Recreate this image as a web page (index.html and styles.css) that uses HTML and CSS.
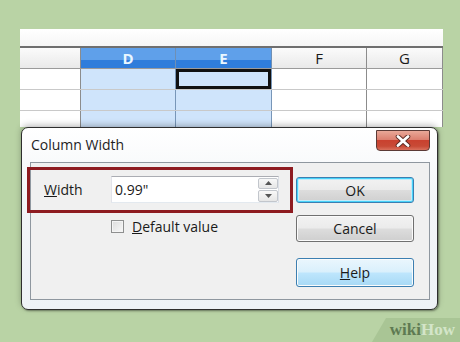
FILE: index.html
```html
<!DOCTYPE html>
<html>
<head>
<meta charset="utf-8">
<link rel="stylesheet" href="styles.css">
</head>
<body>
<div class="sheet">
  <div class="toolbar"></div>
  <div class="row head">
    <div class="c rh"></div>
    <div class="c sel-h">D</div>
    <div class="c sel-h">E</div>
    <div class="c">F</div>
    <div class="c">G</div>
  </div>
  <div class="row">
    <div class="c"></div><div class="c sel"></div><div class="c sel cur"></div><div class="c"></div><div class="c"></div>
  </div>
  <div class="row">
    <div class="c"></div><div class="c sel"></div><div class="c sel"></div><div class="c"></div><div class="c"></div>
  </div>
  <div class="row">
    <div class="c"></div><div class="c sel"></div><div class="c sel"></div><div class="c"></div><div class="c"></div>
  </div>
</div>

<div class="dialog">
  <div class="titlebar">
    <span class="title">Column Width</span>
    <div class="close">
      <svg width="16" height="12" viewBox="0 0 16 12"><path d="M3 1.5 L13 10.5 M13 1.5 L3 10.5" stroke="#5a2a22" stroke-width="4.6" stroke-linecap="round"/><path d="M3 1.5 L13 10.5 M13 1.5 L3 10.5" stroke="#fff" stroke-width="2.8" stroke-linecap="round"/></svg>
    </div>
  </div>
  <div class="client">
    <div class="left">
      <div class="redbox">
        <span class="label"><u>W</u>idth</span>
        <div class="input">
          <span class="val">0.99"</span>
          <div class="spin">
            <div class="sb"><svg width="7" height="4" viewBox="0 0 7 4"><path d="M0 4 L3.5 0 L7 4 Z" fill="#555"/></svg></div>
            <div class="sb"><svg width="7" height="4" viewBox="0 0 7 4"><path d="M0 0 L3.5 4 L7 0 Z" fill="#555"/></svg></div>
          </div>
        </div>
      </div>
      <div class="check">
        <span class="box"></span>
        <span><u>D</u>efault value</span>
      </div>
    </div>
    <div class="right">
      <div class="btn ok">OK</div>
      <div class="btn cancel">Cancel</div>
      <div class="btn help"><u>H</u>elp</div>
    </div>
  </div>
</div>

<div class="wm"><span class="wiki">wiki</span><span class="how">How</span></div>
</body>
</html>
```
FILE: styles.css
```css
html, body {
  margin: 0;
  padding: 0;
}
body {
  width: 460px;
  height: 342px;
  overflow: hidden;
  background: #b9d3a5;
  font-family: "Open Sans", "Noto Sans", sans-serif;
  color: #1a1a1a;
}
.sheet {
  margin: 29px 0 0 20px;
  width: 423px;
  height: 98px;
  overflow: hidden;
  background: #fff;
}
.toolbar {
  height: 17px;
  background: linear-gradient(#ffffff, #f6f6f6);
  border-bottom: 2px solid #6f6f6f;
}
.row {
  display: grid;
  grid-template-columns: 61px 95px 96px 95px 76px;
  height: 20px;
  border-bottom: 1px solid #c9c9c9;
}
.row.head {
  height: 20px;
  border-bottom: 1px solid #9a9a9a;
}
.c {
  box-sizing: border-box;
  border-right: 1px solid #8c8c8c;
  font-size: 15px;
  line-height: 20px;
  text-align: center;
}
.head .c {
  background: linear-gradient(#fbfbfb, #e9e9e9);
}
.head .c.sel-h {
  background: linear-gradient(#5fa0ea 0%, #5fa0ea 58%, #2f7ddb 60%, #2f7ddb 100%);
  color: #eaf7ff;
  font-weight: bold;
  border-right-color: #6f8fb4;
}
.c.sel {
  background: #cfe4fb;
  border-right-color: #7896b8;
}
.c.cur {
  box-shadow: inset 0 0 0 3px #111;
}

.dialog {
  position: relative;
  margin-left: 21px;
  width: 417px;
  height: 183px;
  box-sizing: border-box;
  border: 1px solid #2e2e2e;
  border-radius: 7px;
  background: linear-gradient(#ffffff 0%, #f2f5f8 40%, #eef2f6 100%);
  box-shadow: 0 -2px 6px rgba(0,0,0,0.25), 1px 1px 2px rgba(0,0,0,0.4);
  display: flex;
  flex-direction: column;
}
.titlebar {
  height: 34px;
  display: flex;
  justify-content: space-between;
  align-items: flex-start;
  padding: 0 7px 0 9px;
}
.title {
  font-size: 14px;
  line-height: 34px;
  color: #1e1e1e;
}
.close {
  margin-top: 2px;
  width: 54px;
  height: 21px;
  box-sizing: border-box;
  border: 1px solid #5b3a36;
  border-radius: 0 0 4px 4px;
  background: linear-gradient(#e9a898 0%, #dc8070 45%, #c9412f 50%, #c84a36 80%, #d9715d 100%);
  display: flex;
  align-items: center;
  justify-content: center;
}
.client {
  flex: 1;
  margin: 0 7px 9px 8px;
  border: 1px solid #8f979f;
  background: #f0f0f0;
  display: flex;
  align-items: flex-start;
}
.left {
  margin-left: -4px;
  width: 266px;
  margin-top: 4px;
}
.redbox {
  height: 46px;
  box-sizing: border-box;
  border: 3px solid #8e1b20;
  padding: 2px 11px 3px 14px;
  display: flex;
  align-items: center;
  font-size: 14px;
}
.label {
  width: 67px;
}
.input {
  width: 168px;
  height: 27px;
  box-sizing: border-box;
  border: 1px solid;
  border-color: #abadb3 #dbdfe6 #e3e9ef #e2e3ea;
  background: #fff;
  display: flex;
  align-items: center;
  padding-left: 3px;
}
.val {
  flex: 1;
  font-size: 14px;
}
.spin {
  width: 20px;
  height: 24px;
  display: flex;
  flex-direction: column;
  gap: 1px;
}
.sb {
  flex: 1;
  box-sizing: border-box;
  border: 1px solid #c2c6cc;
  border-radius: 2px;
  background: linear-gradient(#f8f8f8, #e6e6e6);
  display: flex;
  align-items: center;
  justify-content: center;
}
.check {
  margin-top: 4px;
  padding-left: 84px;
  display: flex;
  align-items: center;
  gap: 8px;
  font-size: 14px;
}
.box {
  width: 13px;
  height: 13px;
  box-sizing: border-box;
  border: 1px solid #8e8f8f;
  background: linear-gradient(135deg, #dcdcdc, #f8f8f8);
  box-shadow: inset 0 0 0 1px #f4f4f4;
}
.right {
  margin-left: 3px;
  width: 118px;
  display: flex;
  flex-direction: column;
}
.btn {
  box-sizing: border-box;
  border: 1px solid #707070;
  border-radius: 3px;
  background: linear-gradient(#f2f2f2 0%, #ebebeb 49%, #dddddd 51%, #cfcfcf 100%);
  box-shadow: inset 0 0 0 1px #fbfbfb;
  font-size: 14px;
  display: flex;
  align-items: center;
  justify-content: center;
  color: #1a1a1a;
}
.ok {
  margin-top: 14px;
  height: 26px;
  border-color: #3c7fb1;
  box-shadow: inset 0 0 0 1px #48d3fa, inset 0 0 0 2px #c2ecfa;
}
.cancel {
  margin-top: 12px;
  height: 27px;
}
.help {
  margin-top: 16px;
  height: 29px;
  border-color: #3c7fb1;
  background: linear-gradient(#eaf6fd 0%, #d9f0fc 49%, #bee6fd 51%, #a7d9f5 100%);
}

.wm {
  margin: 8px 0 0 auto;
  width: 88px;
  height: 24px;
  background: #a9c595;
  clip-path: polygon(14px 0, 100% 0, 100% 100%, 0 100%);
  display: flex;
  justify-content: flex-end;
  align-items: center;
  padding-right: 5px;
  box-sizing: border-box;
  font-family: "Liberation Serif", "DejaVu Serif", serif;
  font-weight: bold;
  font-size: 17px;
}
.wiki {
  color: #5e7a52;
}
.how {
  color: #d4e5c9;
}
```
